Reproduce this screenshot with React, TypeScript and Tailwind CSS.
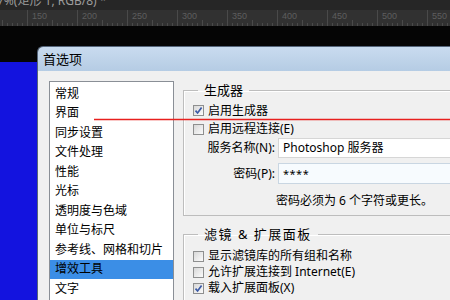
import React from "react";

const items = [
  "常规",
  "界面",
  "同步设置",
  "文件处理",
  "性能",
  "光标",
  "透明度与色域",
  "单位与标尺",
  "参考线、网格和切片",
  "增效工具",
  "文字",
];

function Cb({ checked }: { checked?: boolean }) {
  return (
    <span className="w-[11px] h-[11px] border border-[#8e8f8f] bg-gradient-to-br from-[#d8d8d8] to-[#fbfbfb] flex items-center justify-center shrink-0">
      {checked && (
        <svg width="9" height="9" viewBox="0 0 9 9">
          <path d="M1.5 4.6 L3.6 7 L7.6 1.6" stroke="#3b5aa6" strokeWidth="1.7" fill="none" />
        </svg>
      )}
    </span>
  );
}

function Ruler() {
  const majors = [150, 200, 250, 300, 350, 400, 450, 500, 550];
  const minors: number[] = [];
  for (let x = 2; x < 450; x += 5) minors.push(x);
  return (
    <svg width="450" height="16" className="block">
      {minors.map((x) => {
        const rel = (((x - 27) % 50) + 50) % 50;
        const len = rel === 0 ? 16 : rel === 25 ? 6 : 3;
        return <line key={x} x1={x + 0.5} x2={x + 0.5} y1={16 - len} y2={16} stroke="#4a4a4a" strokeWidth="1" />;
      })}
      {majors.map((m, i) => (
        <text key={m} x={32 + i * 50} y={9} fontSize="9" fill="#5e5e5e" fontFamily="Liberation Sans, sans-serif">
          {m}
        </text>
      ))}
    </svg>
  );
}

export default function App() {
  return (
    <div className="w-[450px] h-[300px] overflow-hidden relative bg-[#050505] font-['Noto_Sans','Noto_Sans_CJK_SC',sans-serif] text-black">
      {/* tab bar */}
      <div className="h-[10px] bg-[#262626] overflow-hidden">
        <div className="-mt-[6px] -ml-[3px] text-[12px] leading-[14px] text-[#9c9c9c] whitespace-nowrap">
          7%(矩形 1, RGB/8) *
        </div>
      </div>
      {/* ruler */}
      <div className="h-[16px] bg-[#313131]">
        <Ruler />
      </div>
      {/* main */}
      <div className="flex h-[274px]">
        <div className="w-[37px] flex flex-col shrink-0">
          <div className="h-[36px] bg-[#050505]" />
          <div className="flex-1 bg-[#1313df]" />
        </div>
        <div className="flex-1 flex flex-col">
          <div className="h-[20px] shrink-0" />
          <div className="w-[460px] flex-1 flex flex-col rounded-tl-[6px] border-l border-t border-[#55657a] overflow-hidden">
            <div className="h-[24px] shrink-0 bg-gradient-to-b from-[#c9dbef] to-[#b5cce4] flex items-center pl-[5px] text-[13px] leading-[16px]">
              首选项
            </div>
            <div className="flex-1 bg-[#f0f0f0] flex pl-[11px] pt-[10px]">
              {/* list */}
              <div className="w-[125px] shrink-0 bg-white border border-[#8a8f96] pt-[2px] text-[12px]">
                {items.map((t) => (
                  <div
                    key={t}
                    className={`h-[19.5px] flex items-center pl-[5px] leading-none ${t === "增效工具" ? "bg-[#3b8ee6]" : ""}`}
                  >
                    {t}
                  </div>
                ))}
              </div>
              {/* right */}
              <div className="flex-1 pl-[9px] text-[12px]">
                <fieldset className="border border-[#bdbdbd] shadow-[inset_1px_1px_0_#fff] pl-[9px] pb-[6px]">
                  <legend className="ml-[5px] px-[6px] text-[13px] leading-[18px]">生成器</legend>
                  <div className="pt-[2px]">
                    <div className="h-[19px] flex items-center">
                      <Cb checked />
                      <span className="ml-[4px] leading-none">启用生成器</span>
                    </div>
                    <div className="h-[18px] flex items-center">
                      <Cb />
                      <span className="ml-[4px] leading-none">启用远程连接(E)</span>
                    </div>
                    <div className="h-[20px] flex items-center">
                      <span className="w-[82px] text-right leading-none">服务名称(N):</span>
                      <div className="ml-[3px] flex-1 h-[20px] bg-white border border-[#d6d6d6] flex items-center pl-[4px] leading-none">
                        Photoshop 服务器
                      </div>
                    </div>
                    <div className="mt-[5px] h-[21px] flex items-center">
                      <span className="w-[82px] text-right leading-none">密码(P):</span>
                      <div className="ml-[3px] flex-1 h-[21px] bg-[#f7fbfe] border border-[#c9d6e2] flex items-center pl-[4px] leading-none text-[11px] tracking-[0.5px]">
                        ****
                      </div>
                    </div>
                    <div className="mt-[9px] h-[16px] flex items-center pl-[83px] leading-none">
                      密码必须为 6 个字符或更长。
                    </div>
                  </div>
                </fieldset>
                <fieldset className="mt-[9px] border border-[#bdbdbd] shadow-[inset_1px_1px_0_#fff] pl-[9px] pb-[6px]">
                  <legend className="ml-[5px] px-[6px] text-[13px] leading-[18px] tracking-[1.5px]">滤镜 &amp; 扩展面板</legend>
                  <div className="pt-[5px]">
                    <div className="h-[16px] flex items-center">
                      <Cb />
                      <span className="ml-[4px] leading-none">显示滤镜库的所有组和名称</span>
                    </div>
                    <div className="h-[16px] flex items-center">
                      <Cb />
                      <span className="ml-[4px] leading-none">允许扩展连接到 Internet(E)</span>
                    </div>
                    <div className="h-[16px] flex items-center">
                      <Cb checked />
                      <span className="ml-[4px] leading-none">载入扩展面板(X)</span>
                    </div>
                  </div>
                </fieldset>
              </div>
            </div>
          </div>
        </div>
      </div>
      {/* red annotation line */}
      <svg className="absolute left-0 top-0 z-10 pointer-events-none" width="450" height="300">
        <line x1="94" y1="119.5" x2="450" y2="119.5" stroke="#e8201e" strokeWidth="1.4" />
      </svg>
    </div>
  );
}
